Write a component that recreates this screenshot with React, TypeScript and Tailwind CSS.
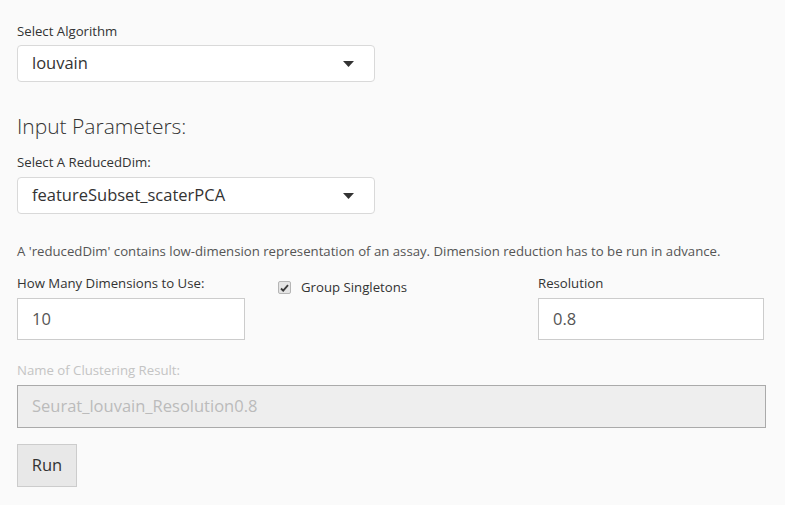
const font = { fontFamily: '"Open Sans", "Liberation Sans", sans-serif' };

const Caret = () => (
  <svg width="11" height="6" viewBox="0 0 11 6" className="shrink-0">
    <path d="M0 0h11L5.5 6z" fill="#333" />
  </svg>
);

const Select = ({ value }: { value: string }) => (
  <div className="flex h-[37px] w-[358px] items-center justify-between rounded-[4px] border border-[#d9d9d9] bg-white pl-[14px] pr-[20px] text-[16.5px] text-[#333]">
    <span>{value}</span>
    <Caret />
  </div>
);

const Label = ({ children, disabled }: { children: React.ReactNode; disabled?: boolean }) => (
  <div className={`text-[13.2px] leading-[18px] ${disabled ? "text-[#c4c4c4]" : "text-[#333]"}`}>{children}</div>
);

const TextInput = ({ value }: { value: string }) => (
  <div className="flex h-[42px] items-center border border-[#ccc] bg-white px-[14px] text-[16.5px] text-[#555]">
    {value}
  </div>
);

const CheckMark = () => (
  <span className="flex h-[13px] w-[13px] shrink-0 items-center justify-center rounded-[2px] border border-[#b5b5b5] bg-[#e4e4e4]">
    <svg width="9" height="8" viewBox="0 0 9 8">
      <path d="M1 4.5l2.2 2.2L8 1.2" fill="none" stroke="#3a3a3a" strokeWidth="1.8" />
    </svg>
  </span>
);

export default function App() {
  return (
    <div className="min-h-[505px] w-[785px] bg-[#fafafa] pl-[17px] pr-[19px] pt-[22px]" style={font}>
      <Label>Select Algorithm</Label>
      <div className="mt-[5px]">
        <Select value="louvain" />
      </div>

      <h3 className="mt-[32px] text-[21px] font-light leading-[25px] text-[#333]">Input Parameters:</h3>
      <div className="mt-[14px]">
        <Label>Select A ReducedDim:</Label>
      </div>
      <div className="mt-[6px]">
        <Select value="featureSubset_scaterPCA" />
      </div>

      <p className="mt-[28px] text-[13.2px] leading-[18px] text-[#555]">
        A 'reducedDim' contains low-dimension representation of an assay. Dimension reduction has to be run in advance.
      </p>

      <div className="mt-[14px] grid grid-cols-[228px_1fr_226px] pr-[2px]">
        <div>
          <Label>How Many Dimensions to Use:</Label>
          <div className="mt-[6px]">
            <TextInput value="10" />
          </div>
        </div>
        <div className="pl-[33px] pt-[4px]">
          <label className="flex items-center gap-[10px] text-[13.2px] text-[#333]">
            <CheckMark />
            Group Singletons
          </label>
        </div>
        <div>
          <Label>Resolution</Label>
          <div className="mt-[6px]">
            <TextInput value="0.8" />
          </div>
        </div>
      </div>

      <div className="mt-[21px]">
        <Label disabled>Name of Clustering Result:</Label>
      </div>
      <div className="mt-[6px] flex h-[43px] items-center border border-[#aaa] bg-[#eee] px-[14px] text-[16.5px] text-[#bbb]">
        Seurat_louvain_Resolution0.8
      </div>

      <button
        type="button"
        className="mt-[16px] h-[43px] w-[60px] border border-[#ccc] bg-[#e8e8e8] text-[16.5px] text-[#333]"
      >
        Run
      </button>
    </div>
  );
}
